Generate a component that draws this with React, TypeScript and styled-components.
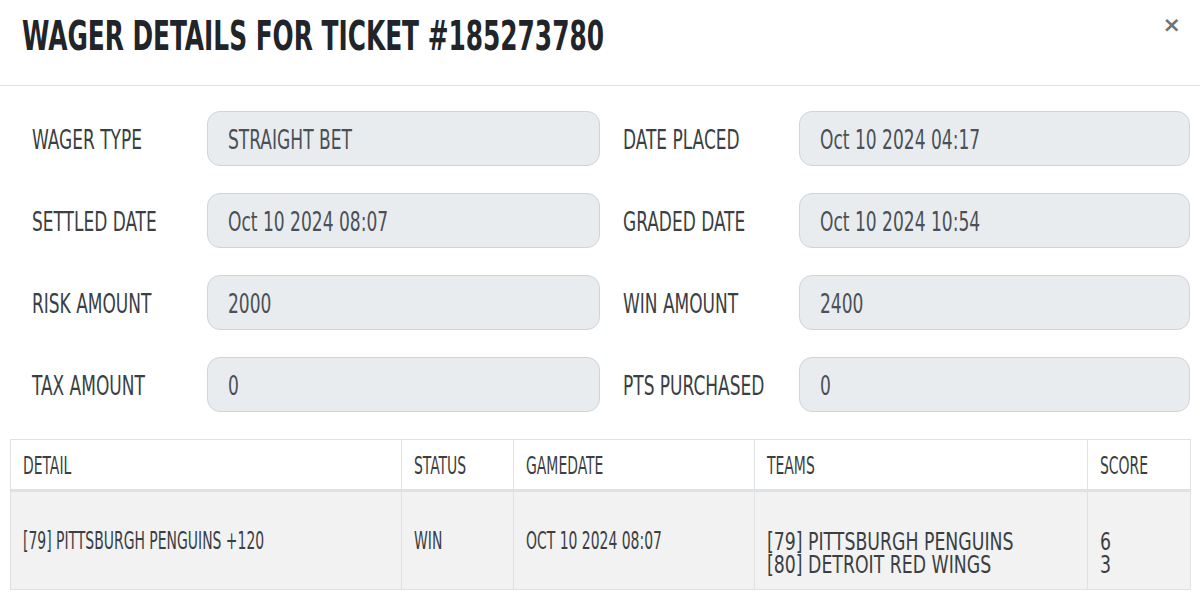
import styled, { createGlobalStyle } from 'styled-components';

const Global = createGlobalStyle`
  html, body {
    margin: 0;
    padding: 0;
    background: #fff;
  }
  body {
    font-family: 'DejaVu Sans Condensed', 'DejaVu Sans', 'Liberation Sans', sans-serif;
    color: #212529;
  }
`;

const S = {
  Modal: styled.div`
    width: 1200px;
    height: 598px;
    background: #fff;
    overflow: hidden;
  `,
  Header: styled.div`
    height: 86px;
    border-bottom: 1px solid #dee2e6;
    display: flex;
    align-items: flex-start;
    justify-content: space-between;
    padding: 0 19px 0 22px;
    box-sizing: border-box;
  `,
  Title: styled.h1`
    margin: 12px 0 0;
    font-size: 40px;
    font-weight: 700;
    line-height: 48px;
    color: #212529;
  `,
  Close: styled.button`
    margin-top: 14px;
    border: 0;
    background: none;
    padding: 0;
    font-family: 'DejaVu Sans', sans-serif;
    font-size: 22px;
    font-weight: 700;
    color: #737373;
    line-height: 22px;
    cursor: pointer;
  `,
  // condensed look: the narrow display face isn't installed, so squeeze horizontally
  Squeeze: styled.span<{ $sx: number }>`
    display: inline-block;
    white-space: nowrap;
    transform: scaleX(${(p) => p.$sx});
    transform-origin: left center;
  `,
  Body: styled.div`
    padding: 25px 10px 0;
  `,
  Form: styled.div`
    display: grid;
    grid-template-columns: 197px 393px 199px 391px;
    row-gap: 27px;
    align-items: center;
    margin-bottom: 27px;
  `,
  Label: styled.div<{ $right?: boolean }>`
    padding-left: ${(p) => (p.$right ? '23px' : '22px')};
    padding-top: 2px;
    font-size: 27px;
    font-weight: 400;
    color: #3a3f44;
    white-space: nowrap;
  `,
  Field: styled.div`
    height: 55px;
    box-sizing: border-box;
    border: 1px solid #ced4da;
    border-radius: 13px;
    background: #e9ecef;
    display: flex;
    align-items: center;
    padding: 3px 20px 0;
    font-size: 26px;
    color: #495057;
  `,
  Table: styled.table`
    width: 1180px;
    border-collapse: collapse;
    table-layout: fixed;
    font-size: 25px;
    color: #3a3f44;
  `,
  Th: styled.th<{ $w: number }>`
    width: ${(p) => p.$w}px;
    height: 51px;
    box-sizing: border-box;
    border: 1px solid #dee2e6;
    border-bottom: 3px solid #dee2e6;
    padding: 2px 12px 0;
    text-align: left;
    font-weight: 400;
  `,
  Td: styled.td<{ $stack?: boolean }>`
    height: 99px;
    box-sizing: border-box;
    border: 1px solid #dee2e6;
    padding: ${(p) => (p.$stack ? '24px 12px 0' : '0 12px')};
    background: #f2f2f2;
    vertical-align: middle;
    line-height: 23px;
  `,
};

const fields: [string, string, string, string][] = [
  ['WAGER TYPE', 'STRAIGHT BET', 'DATE PLACED', 'Oct 10 2024 04:17'],
  ['SETTLED DATE', 'Oct 10 2024 08:07', 'GRADED DATE', 'Oct 10 2024 10:54'],
  ['RISK AMOUNT', '2000', 'WIN AMOUNT', '2400'],
  ['TAX AMOUNT', '0', 'PTS PURCHASED', '0'],
];

const columns: [string, number][] = [
  ['DETAIL', 391],
  ['STATUS', 112],
  ['GAMEDATE', 241],
  ['TEAMS', 333],
  ['SCORE', 103],
];

const LABEL_SX = 0.7;
const VALUE_SX = 0.73;
const TABLE_SX = 0.62;
const STACK_SX = 0.77;

const App = () => {
  return (
    <>
      <Global />
      <S.Modal>
        <S.Header>
          <S.Title>
            <S.Squeeze $sx={0.69}>WAGER DETAILS FOR TICKET #185273780</S.Squeeze>
          </S.Title>
          <S.Close aria-label="Close">×</S.Close>
        </S.Header>
        <S.Body>
          <S.Form>
            {fields.map(([l1, v1, l2, v2]) => [
              <S.Label key={l1}>
                <S.Squeeze $sx={LABEL_SX}>{l1}</S.Squeeze>
              </S.Label>,
              <S.Field key={l1 + v1}>
                <S.Squeeze $sx={VALUE_SX}>{v1}</S.Squeeze>
              </S.Field>,
              <S.Label key={l2} $right>
                <S.Squeeze $sx={LABEL_SX}>{l2}</S.Squeeze>
              </S.Label>,
              <S.Field key={l2 + v2}>
                <S.Squeeze $sx={VALUE_SX}>{v2}</S.Squeeze>
              </S.Field>,
            ])}
          </S.Form>
          <S.Table>
            <thead>
              <tr>
                {columns.map(([name, w]) => (
                  <S.Th key={name} $w={w}>
                    <S.Squeeze $sx={TABLE_SX}>{name}</S.Squeeze>
                  </S.Th>
                ))}
              </tr>
            </thead>
            <tbody>
              <tr>
                <S.Td>
                  <S.Squeeze $sx={TABLE_SX}>[79] PITTSBURGH PENGUINS +120</S.Squeeze>
                </S.Td>
                <S.Td>
                  <S.Squeeze $sx={TABLE_SX}>WIN</S.Squeeze>
                </S.Td>
                <S.Td>
                  <S.Squeeze $sx={TABLE_SX}>OCT 10 2024 08:07</S.Squeeze>
                </S.Td>
                <S.Td $stack>
                  <S.Squeeze $sx={STACK_SX}>
                    [79] PITTSBURGH PENGUINS
                    <br />
                    [80] DETROIT RED WINGS
                  </S.Squeeze>
                </S.Td>
                <S.Td $stack>
                  <S.Squeeze $sx={STACK_SX}>
                    6
                    <br />3
                  </S.Squeeze>
                </S.Td>
              </tr>
            </tbody>
          </S.Table>
        </S.Body>
      </S.Modal>
    </>
  );
};

export default App;
